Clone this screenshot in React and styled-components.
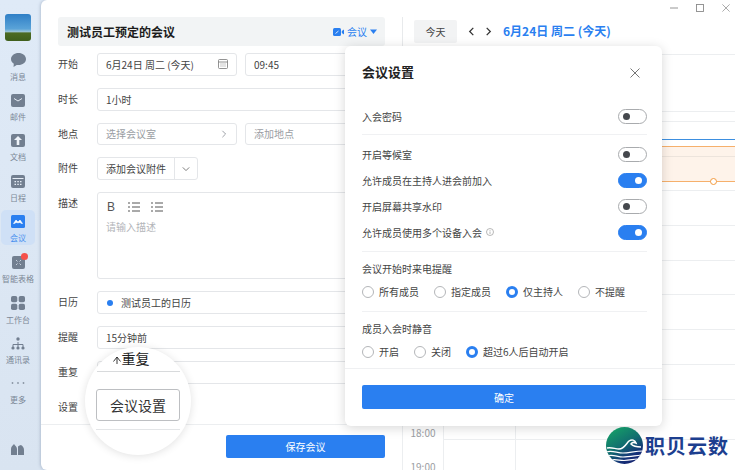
import React from 'react'
import styled, { createGlobalStyle } from 'styled-components'

const BLUE = '#2a7ff0'

const Global = createGlobalStyle`
  html, body { margin: 0; padding: 0; height: 100%; overflow: hidden; }
  body { font-family: "Noto Sans CJK SC", "Noto Sans", sans-serif; font-size: 10px; color: #333; }
  * { box-sizing: border-box; }
`

const Page = styled.div`
  position: relative;
  display: flex;
  width: 735px;
  height: 470px;
  overflow: hidden;
  background: linear-gradient(180deg, #dfeaf7 0%, #d9e4f1 100%);
`

/* sidebar */
const Sidebar = styled.nav`
  width: 40px;
  flex: none;
  display: flex;
  flex-direction: column;
  align-items: center;
  padding-top: 14px;
`
const Avatar = styled.div`
  width: 26px;
  height: 27px;
  border-radius: 3px;
  margin: 0 4px 7px 0;
  background: linear-gradient(180deg, #2f7fc6 0%, #5aa3d8 55%, #9fc6d6 66%, #4d6b22 70%, #3f5f1c 100%);
`
const NavItem = styled.div`
  width: 34px;
  height: 35px;
  margin: 0 5px 5.5px 1px;
  padding-top: 5px;
  display: flex;
  flex-direction: column;
  align-items: center;
  gap: 5px;
  position: relative;
  border-radius: 5px;
  color: ${p => (p.$active ? BLUE : '#727f90')};
  background: ${p => (p.$active ? '#cfe0f6' : 'transparent')};
  svg { display: block; }
`
const NavLabel = styled.span`
  font-size: 8px;
  line-height: 10px;
  white-space: nowrap;
  color: ${p => (p.$active ? '#4a90ee' : '#7b8796')};
`
const Badge = styled.span`
  position: absolute;
  top: 2px;
  right: 7px;
  width: 7px;
  height: 7px;
  border-radius: 50%;
  background: #f5504a;
`
const SideFoot = styled.div`
  margin-top: auto;
  margin-right: 5px;
  margin-bottom: 15px;
  color: #727f90;
  svg { display: block; }
`

/* main window */
const Main = styled.main`
  flex: 1;
  display: flex;
  background: #fff;
  border-radius: 6px 0 0 6px;
  box-shadow: -1px 0 3px rgba(90, 110, 140, 0.3);
  margin-left: 1px;
`
const FormPane = styled.section`
  width: 361px;
  flex: none;
  display: flex;
  flex-direction: column;
  padding-top: 17px;
`
const TitleBar = styled.div`
  margin: 0 17px 7px;
  height: 29px;
  display: flex;
  align-items: center;
  justify-content: space-between;
  padding: 0 8px 0 9px;
  background: #f2f4f5;
  border-radius: 3px;
`
const Title = styled.h1`
  margin: 0;
  font-size: 12px;
  font-weight: 700;
  color: #1c1c1c;
`
const TypePicker = styled.div`
  display: flex;
  align-items: center;
  gap: 3px;
  color: ${BLUE};
`
const Fields = styled.div`
  padding: 0 17px;
  display: flex;
  flex-direction: column;
  gap: 12px;
`
const Row = styled.div`
  display: grid;
  grid-template-columns: 39px 1fr;
  align-items: ${p => (p.$top ? 'start' : 'center')};
`
const Label = styled.label`
  color: #444;
  line-height: 22.8px;
`
const Pair = styled.div`
  display: grid;
  grid-template-columns: 140px 140px;
  gap: 8px;
`
const Input = styled.div`
  height: 22.8px;
  display: flex;
  align-items: center;
  justify-content: space-between;
  gap: 6px;
  padding: 0 8px;
  border: 1px solid #e4e6e9;
  border-radius: 3px;
  background: #fff;
  color: ${p => (p.$muted ? '#9a9da3' : '#444')};
`
const Split = styled.div`
  width: 101px;
  height: 22.8px;
  display: flex;
  border: 1px solid #e4e6e9;
  border-radius: 3px;
  color: #444;
`
const SplitMain = styled.span`
  flex: 1;
  display: flex;
  align-items: center;
  padding-left: 8px;
  border-right: 1px solid #e4e6e9;
`
const SplitCaret = styled.span`
  width: 22px;
  display: flex;
  align-items: center;
  justify-content: center;
  color: #777;
`
const Editor = styled.div`
  height: 87px;
  border: 1px solid #e4e6e9;
  border-radius: 3px;
  padding: 7px 7px;
`
const Toolbar = styled.div`
  display: flex;
  align-items: center;
  gap: 11px;
  height: 14px;
  color: #555;
  margin-bottom: 5px;
`
const Bold = styled.span`
  font-family: "Liberation Sans", sans-serif;
  font-size: 12px;
  width: 12px;
  text-align: center;
`
const Placeholder = styled.div`
  color: #b3b5b9;
  line-height: 16px;
  padding-left: 1px;
`
const Dot = styled.span`
  width: 6px;
  height: 6px;
  margin: 0 8px 0 0;
  border-radius: 50%;
  background: ${BLUE};
`
const CalName = styled.div`
  display: flex;
  align-items: center;
  flex: 1;
  padding-left: 1px;
`
const Footer = styled.footer`
  margin-top: auto;
  height: 46px;
  border-top: 1px solid #eceef0;
  display: flex;
  justify-content: flex-end;
  padding: 10px 17px 0 0;
`
const SaveButton = styled.button`
  width: 159px;
  height: 23px;
  border: 0;
  border-radius: 2px;
  background: ${BLUE};
  color: #fff;
  font: inherit;
`

/* calendar */
const CalendarPane = styled.section`
  flex: 1;
  position: relative;
  display: flex;
  flex-direction: column;
  padding-top: 17px;
`
const CalHead = styled.div`
  height: 37px;
  padding: 3px 0 0 11px;
  display: flex;
  align-items: flex-start;
  border-left: 1px solid #e8eaec;
`
const TodayButton = styled.button`
  width: 43px;
  height: 23px;
  border: 0;
  border-radius: 2px;
  background: #f2f3f4;
  color: #444;
  font: inherit;
`
const Arrows = styled.div`
  display: flex;
  gap: 8px;
  height: 23px;
  align-items: center;
  margin: 0 10px 0 10px;
  color: #333;
`
const CalDate = styled.div`
  font-size: 12px;
  font-weight: 700;
  line-height: 22px;
  color: ${BLUE};
`
const AllDay = styled.div`
  height: ${p => p.$h}px;
  border-top: 1px solid #eceef0;
  border-left: 1px solid #eceef0;
`
const Hours = styled.div`
  flex: 1;
  border-left: 1px solid #eceef0;
  border-top: 1px solid #eceef0;
`
const Hour = styled.div`
  height: 34.7px;
  display: grid;
  grid-template-columns: 40px 72px 1fr;
`
const HourMark = styled.div`
  color: #9b9ea3;
  font-size: 10px;
  line-height: 14px;
  text-align: center;
  margin-top: 26px;
`
const HourCell = styled.div`
  border-left: 1px solid #eceef0;
  border-bottom: 1px solid #eceef0;
`
const NowLine = styled.div`
  position: absolute;
  left: 41px;
  right: 0;
  top: 139px;
  height: 1px;
  background: #3d8fe0;
`
const EventBox = styled.div`
  position: absolute;
  left: 113px;
  right: 0;
  top: 146px;
  height: 36px;
  background: rgba(247, 160, 80, 0.12);
  border-top: 1px solid #f6b06c;
  border-bottom: 1px solid #f6b06c;
`
const EventHandle = styled.span`
  position: absolute;
  right: 18px;
  bottom: -4px;
  width: 7px;
  height: 7px;
  border-radius: 50%;
  border: 1.5px solid #f39a3e;
  background: #fff;
`
const WindowControls = styled.div`
  position: absolute;
  top: 4px;
  right: 5px;
  display: flex;
  gap: 18px;
  color: #8a8a8a;
  svg { display: block; }
`

/* modal */
const Modal = styled.div`
  position: absolute;
  left: 345px;
  top: 46px;
  width: 317px;
  height: 380px;
  background: #fff;
  border-radius: 6px;
  box-shadow: 0 2px 12px rgba(0, 0, 0, 0.16);
  display: flex;
  flex-direction: column;
`
const ModalHead = styled.div`
  height: 53px;
  padding: 0 22px 0 17px;
  display: flex;
  align-items: center;
  justify-content: space-between;
  color: #666;
`
const ModalTitle = styled.h2`
  margin: 0;
  font-size: 13px;
  font-weight: 700;
  color: #222;
  padding-bottom: 2px;
`
const ModalBody = styled.div`
  padding: 0 15px 0 17px;
  flex: 1;
`
const SettingRow = styled.div`
  height: ${p => p.$h || 26}px;
  display: flex;
  align-items: center;
  justify-content: space-between;
  color: #444;
`
const Hint = styled.span`
  display: inline-flex;
  align-items: center;
  gap: 4px;
`
const Divider = styled.div`
  height: 1px;
  background: #f0f1f3;
  margin: ${p => p.$m || '0'};
`
const Toggle = styled.span`
  width: 29px;
  height: 15px;
  border-radius: 8px;
  display: flex;
  align-items: center;
  justify-content: ${p => (p.$on ? 'flex-end' : 'flex-start')};
  padding: 0 4px;
  background: ${p => (p.$on ? BLUE : '#fff')};
  border: 1px solid ${p => (p.$on ? BLUE : '#a9abae')};
  &::after {
    content: '';
    width: 7px;
    height: 7px;
    border-radius: 50%;
    background: ${p => (p.$on ? '#fff' : '#45484d')};
  }
`
const GroupTitle = styled.div`
  color: #444;
  line-height: 14px;
  margin-bottom: 8px;
`
const RadioRow = styled.div`
  display: flex;
  gap: 15px;
  height: 15px;
  align-items: center;
`
const RadioItem = styled.span`
  display: flex;
  align-items: center;
  gap: 5px;
  color: #444;
`
const RadioDot = styled.span`
  width: 12px;
  height: 12px;
  border-radius: 50%;
  border: ${p => (p.$on ? `3.5px solid ${BLUE}` : '1px solid #b4b6b9')};
  background: #fff;
`
const ModalFoot = styled.div`
  height: 58px;
  border-top: 1px solid #eff0f2;
  padding: 16px 17px 0;
`
const ConfirmButton = styled.button`
  width: 284px;
  height: 24px;
  border: 0;
  border-radius: 2px;
  background: ${BLUE};
  color: #fff;
  font: inherit;
`

/* magnifier */
const Lens = styled.div`
  position: absolute;
  left: 85px;
  top: 347px;
  width: 106px;
  height: 108px;
  border-radius: 50%;
  background: #fff;
  box-shadow: 0 1px 8px rgba(0, 0, 0, 0.12);
  overflow: hidden;
  display: flex;
  flex-direction: column;
  align-items: center;
`
const LensRepeat = styled.div`
  width: 83px;
  height: 25px;
  border-bottom: 1px solid #d8dadc;
  display: flex;
  align-items: flex-start;
  gap: 1px;
  padding: 2px 0 0 16px;
  font-size: 14px;
  line-height: 18px;
  color: #222;
  svg { margin-top: 7px; }
`
const LensButton = styled.div`
  width: 84px;
  height: 32px;
  margin-top: 17px;
  display: flex;
  align-items: center;
  justify-content: center;
  font-size: 14px;
  color: #333;
  border: 1px solid #bdbfc2;
  border-radius: 3px;
  background: #fff;
`
const LensRule = styled.div`
  width: 84px;
  height: 1px;
  margin-top: 8px;
  background: #e3e5e7;
`

/* watermark */
const Watermark = styled.div`
  position: absolute;
  left: 606px;
  top: 427px;
  display: flex;
  align-items: center;
  gap: 2px;
  svg { display: block; }
`
const WatermarkText = styled.span`
  font-size: 20px;
  font-weight: 700;
  letter-spacing: 1px;
  color: #1d3f8f;
  line-height: 36px;
`

const icons = {
  message: <svg width="15" height="14" viewBox="0 0 15 14"><path fill="currentColor" d="M7.500 0C3.400 0 0 2.700 0 6c0 1.900 1.100 3.600 2.800 4.700L2.500 14l3.200-2c.6.1 1.200.1 1.800.1 4.100 0 7.500-2.700 7.500-6.100S11.600 0 7.500 0z" /></svg>,
  mail: <svg width="14" height="13" viewBox="0 0 14 13"><rect width="14" height="13" rx="2" fill="currentColor" /><path d="M3 4.500 7 7l4-2.500" stroke="#e6edf6" strokeWidth="1" fill="none" /></svg>,
  doc: <svg width="14" height="13" viewBox="0 0 14 13"><rect width="14" height="13" rx="2" fill="currentColor" /><path d="M7 2 3 6h2.700v5h2.600V6H11z" fill="#eef3f9" /></svg>,
  schedule: <svg width="14" height="13" viewBox="0 0 14 13"><rect width="14" height="13" rx="2" fill="currentColor" /><rect x="1.500" y="3" width="11" height="1" fill="#e6edf6" /><path d="M3.500 6h1.500v1.200H3.500zM6.300 6h1.500v1.200H6.300zM9 6h1.500v1.200H9zM3.500 8.800h1.500V10H3.500zM6.300 8.800h1.500V10H6.300zM9 8.800h1.500V10H9z" fill="#e6edf6" /></svg>,
  meeting: <svg width="14" height="13" viewBox="0 0 14 13"><rect width="14" height="13" rx="1.500" fill="currentColor" /><path d="M2.500 8.500 5 5l2 2 2-2 2.500 3.500c-1.500.2-2.300-.8-2.500-1.300-.5.8-3.500.8-4 0-.2.500-1 1.500-2.500 1.300z" fill="#fff" stroke="#fff" strokeWidth=".6" /></svg>,
  table: <svg width="13" height="13" viewBox="0 0 13 13"><rect width="13" height="13" rx="2" fill="currentColor" /><path d="M4 4l1.500 1.500M9 4 7.500 5.500M4 9l1.500-1.500M9 9 7.500 7.500" stroke="#dfe7f1" strokeWidth=".8" /></svg>,
  work: <svg width="14" height="14" viewBox="0 0 14 14" fill="currentColor"><rect width="6.300" height="6.300" rx="1.800" /><rect x="7.700" width="6.300" height="6.300" rx="1.800" /><rect y="7.700" width="6.300" height="6.300" rx="1.800" /><rect x="7.700" y="7.700" width="6.300" height="6.300" rx="1.800" /></svg>,
  contacts: <svg width="14" height="13" viewBox="0 0 14 13" fill="currentColor"><circle cx="7" cy="2" r="1.700" /><path d="M2 10V7.500h10V10" stroke="currentColor" fill="none" /><path d="M7 5v5" stroke="currentColor" /><circle cx="2" cy="11" r="1.600" /><circle cx="7" cy="11" r="1.600" /><circle cx="12" cy="11" r="1.600" /></svg>,
  more: <svg width="14" height="13" viewBox="0 0 14 13" fill="#8a95a4"><circle cx="1.500" cy="6" r=".9" /><circle cx="7" cy="6" r=".9" /><circle cx="12.500" cy="6" r=".9" /></svg>,
}

const Chevron = ({ dir = 'right', size = 8, w = 1.2 }) => {
  const d = { right: 'M3 1l4 4-4 4', left: 'M7 1 3 5l4 4', down: 'M1 3l4 4 4-4' }[dir]
  return <svg width={size} height={size} viewBox="0 0 10 10" fill="none" stroke="currentColor" strokeWidth={w}><path d={d} /></svg>
}
const ListIcon = () => (
  <svg width="12" height="12" viewBox="0 0 12 12" fill="none" stroke="currentColor"><path d="M4 2h8M4 6h8M4 10h8M0 2h2M0 6h2M0 10h2" /></svg>
)
const CalIcon = () => (
  <svg width="10" height="10" viewBox="0 0 10 10" fill="none" stroke="#777" strokeWidth=".8"><rect x=".5" y=".5" width="9" height="9" rx="1" /><path d="M.5 3h9M2.500 5h1M4.500 5h1M6.500 5h1M2.500 7h1M4.500 7h1M6.500 7h1" /></svg>
)
const VideoIcon = () => (
  <svg width="11" height="8" viewBox="0 0 11 8" fill="#2a7ff0"><rect width="8" height="8" rx="1.500" /><path d="M8.800 3 11 1.500v5L8.800 5z" /><path d="M2.500 5.500 5.500 3" stroke="#fff" strokeWidth=".8" /></svg>
)
const Close = ({ size, color }) => (
  <svg width={size} height={size} viewBox="0 0 10 10" fill="none" stroke={color || 'currentColor'} strokeWidth=".9"><path d="M.5.5l9 9M9.500.5l-9 9" /></svg>
)

const nav = [
  ['消息', icons.message],
  ['邮件', icons.mail],
  ['文档', icons.doc],
  ['日程', icons.schedule],
  ['会议', icons.meeting, true],
  ['智能表格', icons.table, false, true],
  ['工作台', icons.work],
  ['通讯录', icons.contacts],
  ['更多', icons.more],
]

const toggles = [
  ['开启等候室', false],
  ['允许成员在主持人进会前加入', true],
  ['开启屏幕共享水印', false],
  ['允许成员使用多个设备入会', true, true],
]

const Radios = ({ items, on }) => (
  <RadioRow>
    {items.map(t => (
      <RadioItem key={t}><RadioDot $on={t === on} />{t}</RadioItem>
    ))}
  </RadioRow>
)

const Logo = () => (
  <svg width="37" height="37" viewBox="0 0 37 37">
    <defs>
      <linearGradient id="lg" x1="0.2" y1="0" x2="0.8" y2="1">
        <stop offset="0" stopColor="#16a067" />
        <stop offset=".45" stopColor="#11706f" />
        <stop offset=".8" stopColor="#152f78" />
        <stop offset="1" stopColor="#14206c" />
      </linearGradient>
      <clipPath id="lc"><circle cx="18.500" cy="18.500" r="18.500" /></clipPath>
    </defs>
    <circle cx="18.500" cy="18.500" r="18.500" fill="url(#lg)" />
    <g clipPath="url(#lc)" fill="none" stroke="#fff">
      <path strokeWidth="1.500" d="M1 21c5-1 8 1 12 1 5 0 7-5 10-8 3-2 6-1 7 2-2-1-4-.5-5 1 2 2 6 3 10 3" />
      <path strokeWidth="1.200" d="M0 25c6-2 11 1 17 1s12-2 20-2" />
      <path strokeWidth="1.200" d="M1 29c6-2 10 1 16 1s10-1 18-2" />
      <path strokeWidth="1.200" d="M5 33c5-1 8 .5 13 .5s8-1 13-1.500" />
    </g>
  </svg>
)

export default function App() {
  const hourMarks = Array.from({ length: 10 })
  return (
    <Page>
      <Global />
      <Sidebar>
        <Avatar />
        {nav.map(([label, icon, active, badge]) => (
          <NavItem key={label} $active={active}>
            {icon}
            <NavLabel $active={active}>{label}</NavLabel>
            {badge && <Badge />}
          </NavItem>
        ))}
        <SideFoot>
          <svg width="13" height="13" viewBox="0 0 13 13" fill="currentColor"><path d="M0 13V7c0-2 1.500-3.500 3-5 1 1.500 3 3 3 5v6zM7 13V4.500C8 3.500 9 3 10 3c2 1 3 3 3 5v5z" /></svg>
        </SideFoot>
      </Sidebar>

      <Main>
        <FormPane>
          <TitleBar>
            <Title>测试员工预定的会议</Title>
            <TypePicker>
              <VideoIcon />
              <span>会议</span>
              <svg width="7" height="5" viewBox="0 0 7 5" fill="currentColor"><path d="M0 .5h7L3.500 5z" /></svg>
            </TypePicker>
          </TitleBar>
          <Fields>
            <Row>
              <Label>开始</Label>
              <Pair>
                <Input>6月24日 周二 (今天)<CalIcon /></Input>
                <Input>09:45</Input>
              </Pair>
            </Row>
            <Row>
              <Label>时长</Label>
              <Input>1小时</Input>
            </Row>
            <Row>
              <Label>地点</Label>
              <Pair>
                <Input $muted>选择会议室<Chevron /></Input>
                <Input $muted>添加地点</Input>
              </Pair>
            </Row>
            <Row>
              <Label>附件</Label>
              <Split>
                <SplitMain>添加会议附件</SplitMain>
                <SplitCaret><Chevron dir="down" /></SplitCaret>
              </Split>
            </Row>
            <Row $top>
              <Label>描述</Label>
              <Editor>
                <Toolbar>
                  <Bold>B</Bold>
                  <ListIcon />
                  <ListIcon />
                </Toolbar>
                <Placeholder>请输入描述</Placeholder>
              </Editor>
            </Row>
            <Row>
              <Label>日历</Label>
              <Input><CalName><Dot />测试员工的日历</CalName></Input>
            </Row>
            <Row>
              <Label>提醒</Label>
              <Input>15分钟前</Input>
            </Row>
            <Row>
              <Label>重复</Label>
              <Input />
            </Row>
            <Row>
              <Label>设置</Label>
              <span />
            </Row>
          </Fields>
          <Footer>
            <SaveButton>保存会议</SaveButton>
          </Footer>
        </FormPane>

        <CalendarPane>
          <WindowControls>
            <svg width="8" height="8" viewBox="0 0 8 8" stroke="currentColor" strokeWidth=".9"><path d="M0 4h8" /></svg>
            <svg width="8" height="8" viewBox="0 0 8 8" fill="none" stroke="currentColor" strokeWidth=".9"><rect x=".5" y=".5" width="7" height="7" /></svg>
            <Close size={8} />
          </WindowControls>
          <CalHead>
            <TodayButton>今天</TodayButton>
            <Arrows>
              <Chevron dir="left" size={9} w={1.4} />
              <Chevron size={9} w={1.4} />
            </Arrows>
            <CalDate>6月24日 周二 (今天)</CalDate>
          </CalHead>
          <AllDay $h={57} />
          <AllDay $h={10} />
          <Hours>
            {hourMarks.map((_, i) => (
              <Hour key={i}>
                <HourMark>{i === 8 ? '18:00' : i === 9 ? '19:00' : ''}</HourMark>
                <HourCell />
                <HourCell />
              </Hour>
            ))}
          </Hours>
          <NowLine />
          <EventBox><EventHandle /></EventBox>
        </CalendarPane>
      </Main>

      <Lens>
        <LensRepeat>
          <svg width="8" height="8" viewBox="0 0 8 8" fill="none" stroke="currentColor" strokeWidth=".9"><path d="M.5 5.500 4 1l3.500 4.500M4 1v7" /></svg>
          <span>重复</span>
        </LensRepeat>
        <LensButton>会议设置</LensButton>
        <LensRule />
      </Lens>

      <Modal>
        <ModalHead>
          <ModalTitle>会议设置</ModalTitle>
          <Close size={10} />
        </ModalHead>
        <ModalBody>
          <SettingRow $h={35}>入会密码<Toggle /></SettingRow>
          <Divider $m="0 0 6px" />
          {toggles.map(([text, on, hint]) => (
            <SettingRow key={text}>
              <Hint>
                {text}
                {hint && <svg width="8" height="8" viewBox="0 0 8 8" fill="none" stroke="#999" strokeWidth=".7"><circle cx="4" cy="4" r="3.500" /><path d="M4 3.500V6M4 2v.8" /></svg>}
              </Hint>
              <Toggle $on={on} />
            </SettingRow>
          ))}
          <Divider $m="6px 0 10px" />
          <GroupTitle>会议开始时来电提醒</GroupTitle>
          <Radios items={['所有成员', '指定成员', '仅主持人', '不提醒']} on="仅主持人" />
          <Divider $m="12px 0 10px" />
          <GroupTitle>成员入会时静音</GroupTitle>
          <Radios items={['开启', '关闭', '超过6人后自动开启']} on="超过6人后自动开启" />
        </ModalBody>
        <ModalFoot>
          <ConfirmButton>确定</ConfirmButton>
        </ModalFoot>
      </Modal>

      <Watermark>
        <Logo />
        <WatermarkText>职贝云数</WatermarkText>
      </Watermark>
    </Page>
  )
}
